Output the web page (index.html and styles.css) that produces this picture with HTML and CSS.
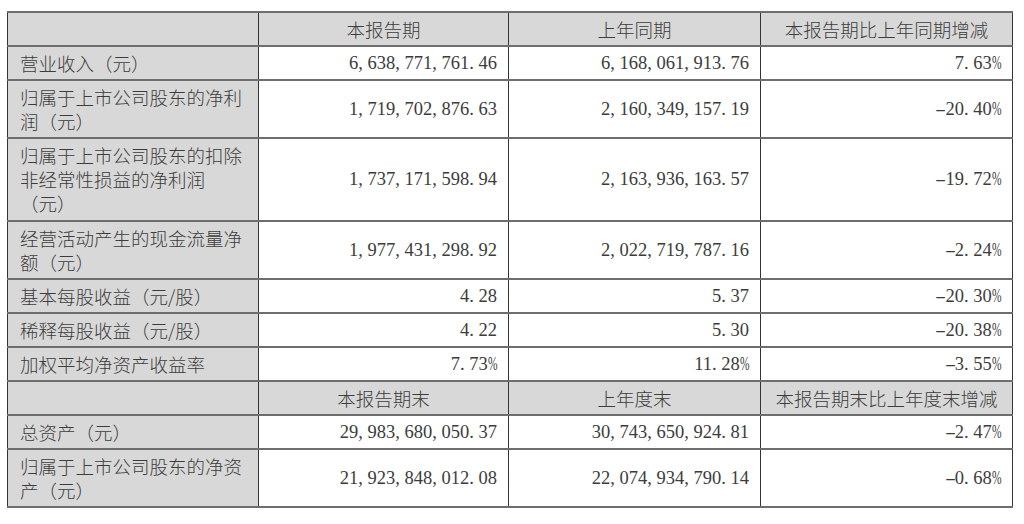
FILE: index.html
```html
<!DOCTYPE html>
<html lang="zh-CN">
<head>
<meta charset="utf-8">
<title>主要会计数据</title>
<link rel="stylesheet" href="styles.css">
</head>
<body>
<table class="fin">
  <colgroup>
    <col class="c1"><col class="c2"><col class="c3"><col class="c4">
  </colgroup>
  <tr class="hd">
    <th class="lbl"></th>
    <th>本报告期</th>
    <th>上年同期</th>
    <th>本报告期比上年同期增减</th>
  </tr>
  <tr>
    <td class="lbl">营业收入（元）</td>
    <td class="num">6<span class="p">,</span>638<span class="p">,</span>771<span class="p">,</span>761<span class="p">.</span>46</td>
    <td class="num">6<span class="p">,</span>168<span class="p">,</span>061<span class="p">,</span>913<span class="p">.</span>76</td>
    <td class="num">7<span class="p">.</span>63<span class="pc">%</span></td>
  </tr>
  <tr>
    <td class="lbl">归属于上市公司股东的净利<br>润（元）</td>
    <td class="num">1<span class="p">,</span>719<span class="p">,</span>702<span class="p">,</span>876<span class="p">.</span>63</td>
    <td class="num">2<span class="p">,</span>160<span class="p">,</span>349<span class="p">,</span>157<span class="p">.</span>19</td>
    <td class="num"><span class="m">-</span>20<span class="p">.</span>40<span class="pc">%</span></td>
  </tr>
  <tr class="tall">
    <td class="lbl">归属于上市公司股东的扣除<br>非经常性损益的净利润<br>（元）</td>
    <td class="num">1<span class="p">,</span>737<span class="p">,</span>171<span class="p">,</span>598<span class="p">.</span>94</td>
    <td class="num">2<span class="p">,</span>163<span class="p">,</span>936<span class="p">,</span>163<span class="p">.</span>57</td>
    <td class="num"><span class="m">-</span>19<span class="p">.</span>72<span class="pc">%</span></td>
  </tr>
  <tr>
    <td class="lbl">经营活动产生的现金流量净<br>额（元）</td>
    <td class="num">1<span class="p">,</span>977<span class="p">,</span>431<span class="p">,</span>298<span class="p">.</span>92</td>
    <td class="num">2<span class="p">,</span>022<span class="p">,</span>719<span class="p">,</span>787<span class="p">.</span>16</td>
    <td class="num"><span class="m">-</span>2<span class="p">.</span>24<span class="pc">%</span></td>
  </tr>
  <tr>
    <td class="lbl">基本每股收益（元/股）</td>
    <td class="num">4<span class="p">.</span>28</td>
    <td class="num">5<span class="p">.</span>37</td>
    <td class="num"><span class="m">-</span>20<span class="p">.</span>30<span class="pc">%</span></td>
  </tr>
  <tr>
    <td class="lbl">稀释每股收益（元/股）</td>
    <td class="num">4<span class="p">.</span>22</td>
    <td class="num">5<span class="p">.</span>30</td>
    <td class="num"><span class="m">-</span>20<span class="p">.</span>38<span class="pc">%</span></td>
  </tr>
  <tr>
    <td class="lbl">加权平均净资产收益率</td>
    <td class="num">7<span class="p">.</span>73<span class="pc">%</span></td>
    <td class="num">11<span class="p">.</span>28<span class="pc">%</span></td>
    <td class="num"><span class="m">-</span>3<span class="p">.</span>55<span class="pc">%</span></td>
  </tr>
  <tr class="hd">
    <th class="lbl"></th>
    <th>本报告期末</th>
    <th>上年度末</th>
    <th>本报告期末比上年度末增减</th>
  </tr>
  <tr>
    <td class="lbl">总资产（元）</td>
    <td class="num">29<span class="p">,</span>983<span class="p">,</span>680<span class="p">,</span>050<span class="p">.</span>37</td>
    <td class="num">30<span class="p">,</span>743<span class="p">,</span>650<span class="p">,</span>924<span class="p">.</span>81</td>
    <td class="num"><span class="m">-</span>2<span class="p">.</span>47<span class="pc">%</span></td>
  </tr>
  <tr>
    <td class="lbl">归属于上市公司股东的净资<br>产（元）</td>
    <td class="num">21<span class="p">,</span>923<span class="p">,</span>848<span class="p">,</span>012<span class="p">.</span>08</td>
    <td class="num">22<span class="p">,</span>074<span class="p">,</span>934<span class="p">,</span>790<span class="p">.</span>14</td>
    <td class="num"><span class="m">-</span>0<span class="p">.</span>68<span class="pc">%</span></td>
  </tr>
</table>
</body>
</html>
```

FILE: styles.css
```css
html, body {
  margin: 0;
  padding: 0;
  background: #ffffff;
}
body {
  padding: 11px 0 0 7px;
}
.fin {
  border-collapse: collapse;
  table-layout: fixed;
  width: 1005px;
  font-family: "Liberation Serif", "Noto Sans CJK SC", serif;
  font-size: 18.5px;
  line-height: 24px;
  color: #3c3c3c;
}
.c1 { width: 251px; }
.c2 { width: 250px; }
.c3 { width: 252px; }
.c4 { width: 252px; }
.fin th,
.fin td {
  border-top: 2px solid #6e6e6e;
  border-bottom: 2px solid #6e6e6e;
  border-left: 1px solid #333333;
  border-right: 1px solid #333333;
  padding: 4px 11px 4px 11px;
  vertical-align: middle;
  white-space: nowrap;
}
.fin th {
  font-weight: normal;
  text-align: center;
  background: #d8d8d8;
}
.fin .lbl {
  background: #d8d8d8;
  text-align: left;
  padding-left: 12px;
  font-family: "Noto Sans CJK SC", sans-serif;
  font-weight: 300;
  font-size: 18.5px;
}
.fin .hd th {
  font-family: "Noto Sans CJK SC", sans-serif;
  font-weight: 300;
}
.fin .num {
  text-align: right;
  padding-right: 11px;
}
.fin .tall td {
  padding-top: 4px;
  padding-bottom: 5px;
}
.p {
  display: inline-block;
  width: 0.5em;
  text-align: left;
}
.pc {
  display: inline-block;
  width: 0.5em;
  transform: scaleX(0.62);
  transform-origin: left center;
}
.m {
  display: inline-block;
  width: 0.5em;
  text-align: center;
  transform: scaleX(1.8) scaleY(0.8);
}
```
